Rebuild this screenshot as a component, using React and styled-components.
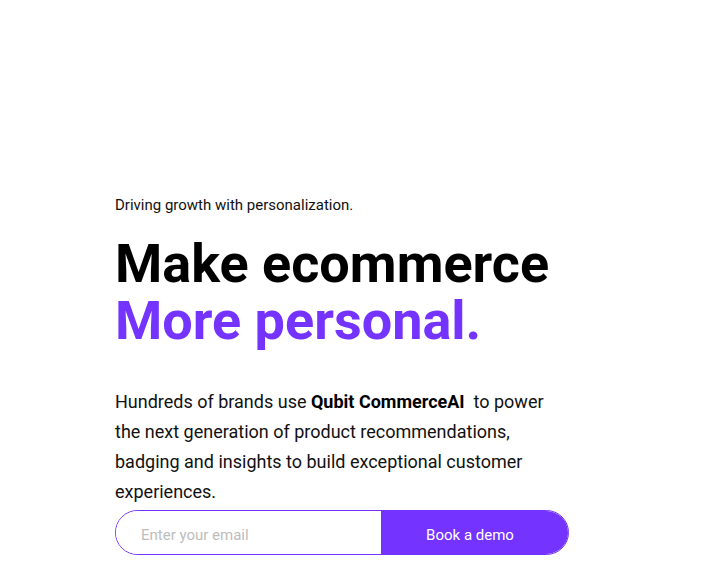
import React, { useState } from 'react';
import styled, { createGlobalStyle } from 'styled-components';

const GlobalStyle = createGlobalStyle`
  html, body {
    margin: 0;
    padding: 0;
    background: #ffffff;
    font-family: Roboto, "Liberation Sans", sans-serif;
  }
  * { box-sizing: border-box; }
`;

const Hero = styled.section`
  width: 720px;
  height: 561px;
  padding: 196px 0 0 115px;
  overflow: hidden;
`;

const Tagline = styled.p`
  margin: 0;
  font-size: 15px;
  line-height: 18px;
  color: #111;
`;

const Title = styled.h1`
  margin: 21px 0 0;
  font-size: 54px;
  line-height: 57px;
  font-weight: 700;
  color: #000;
  letter-spacing: 0;

  span {
    display: block;
    color: #7433ff;
  }
`;

const Lead = styled.p`
  margin: 38px 0 0;
  width: 440px;
  font-size: 18px;
  line-height: 30px;
  color: #111;

  strong {
    font-weight: 700;
    color: #000;
  }
`;

const DemoForm = styled.form`
  display: flex;
  width: 454px;
  height: 45px;
  margin-top: 3px;
  border: 1px solid #7433ff;
  border-radius: 23px;
  overflow: hidden;
`;

const EmailInput = styled.input`
  flex: 1;
  border: none;
  outline: none;
  padding: 4px 0 0 25px;
  font-family: inherit;
  font-size: 15px;
  color: #222;
  background: #fff;

  &::placeholder {
    color: #bdbdbd;
  }
`;

const DemoButton = styled.button`
  width: 187px;
  border: none;
  padding: 4px 9px 0 0;
  background: #7433ff;
  color: #fff;
  font-family: inherit;
  font-size: 15px;
  cursor: pointer;
`;

export default function App() {
  const [email, setEmail] = useState('');

  return (
    <>
      <GlobalStyle />
      <Hero>
        <Tagline>Driving growth with personalization.</Tagline>
        <Title>
          Make ecommerce
          <span>More personal.</span>
        </Title>
        <Lead>
          Hundreds of brands use <strong>Qubit CommerceAI</strong>&nbsp; to power the next
          generation of product recommendations, badging and insights to build exceptional
          customer experiences.
        </Lead>
        <DemoForm onSubmit={(e) => e.preventDefault()}>
          <EmailInput
            type="email"
            placeholder="Enter your email"
            value={email}
            onChange={(e) => setEmail(e.target.value)}
          />
          <DemoButton type="submit">Book a demo</DemoButton>
        </DemoForm>
      </Hero>
    </>
  );
}
